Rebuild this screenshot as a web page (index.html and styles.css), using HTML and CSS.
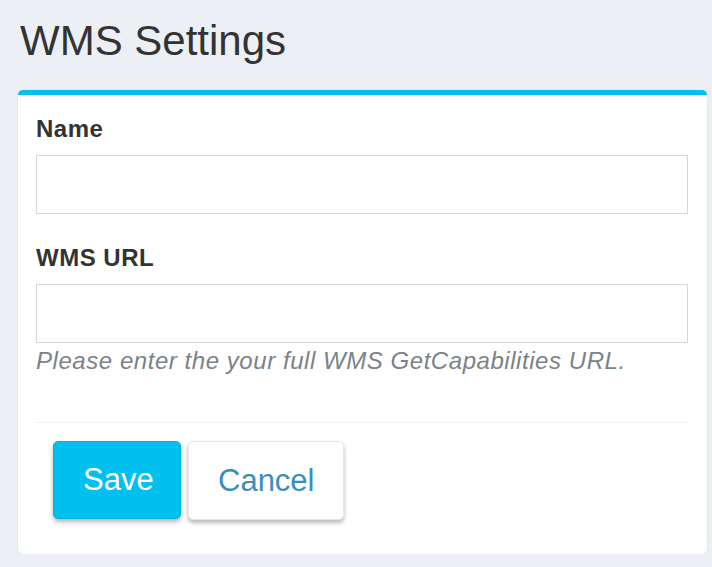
FILE: index.html
```html
<!DOCTYPE html>
<html>
<head>
<meta charset="utf-8">
<link rel="stylesheet" href="styles.css">
</head>
<body>
<h1 class="page-title">WMS Settings</h1>
<div class="card">
  <div class="card-body">
    <div class="group">
      <label class="label">Name</label>
      <input class="field" type="text">
    </div>
    <div class="group group-second">
      <label class="label">WMS URL</label>
      <input class="field" type="text">
      <p class="help">Please enter the your full WMS GetCapabilities URL.</p>
    </div>
  </div>
  <div class="card-footer">
    <button class="btn btn-save">Save</button>
    <button class="btn btn-cancel">Cancel</button>
  </div>
</div>
</body>
</html>
```
FILE: styles.css
```css
html, body {
  margin: 0;
  padding: 0;
  background: #ecf0f5;
  font-family: "Liberation Sans", Arial, sans-serif;
  color: #333;
}
.page-title {
  margin: 0 0 25px 0;
  padding: 17px 0 0 20px;
  font-size: 42px;
  line-height: 48px;
  font-weight: normal;
  color: #333;
}
.card {
  margin: 0 5px 0 18px;
  background: #fff;
  border-top: 5px solid #00c0ef;
  border-radius: 5px;
  box-shadow: 0 1px 2px rgba(0, 0, 0, 0.12);
}
.card-body {
  padding: 20px 19px 0 18px;
}
.group {
  display: flex;
  flex-direction: column;
}
.group-second {
  margin-top: 30px;
}
.label {
  font-size: 24px;
  line-height: 28px;
  font-weight: bold;
  letter-spacing: 0.5px;
  margin-bottom: 12px;
  color: #333;
}
.field {
  box-sizing: border-box;
  height: 59px;
  width: 100%;
  border: 1px solid #d2d6de;
  border-radius: 0;
  margin: 0;
  padding: 0 16px;
  font-size: 24px;
  background: #fff;
}
.help {
  margin: 4px 0 0 0;
  font-size: 24px;
  line-height: 28px;
  font-style: italic;
  letter-spacing: 0.55px;
  color: #7b8288;
}
.card-footer {
  margin: 47px 19px 0 18px;
  border-top: 1px solid #eef0f3;
  padding: 18px 17px 34px;
  display: flex;
  gap: 7px;
}
.btn {
  box-sizing: border-box;
  height: 79px;
  padding: 0 29px;
  font-family: "Liberation Sans", Arial, sans-serif;
  font-size: 31px;
  border-radius: 5px;
  cursor: pointer;
  box-shadow: 0 3px 4px rgba(0, 0, 0, 0.28);
}
.btn-save {
  width: 128px;
  height: 78px;
  background: #00c0ef;
  border: 1px solid #00b3de;
  color: #fff;
}
.btn-cancel {
  width: 156px;
  background: #fff;
  border: 1px solid #e6e6e6;
  color: #3c8dbc;
}
```
